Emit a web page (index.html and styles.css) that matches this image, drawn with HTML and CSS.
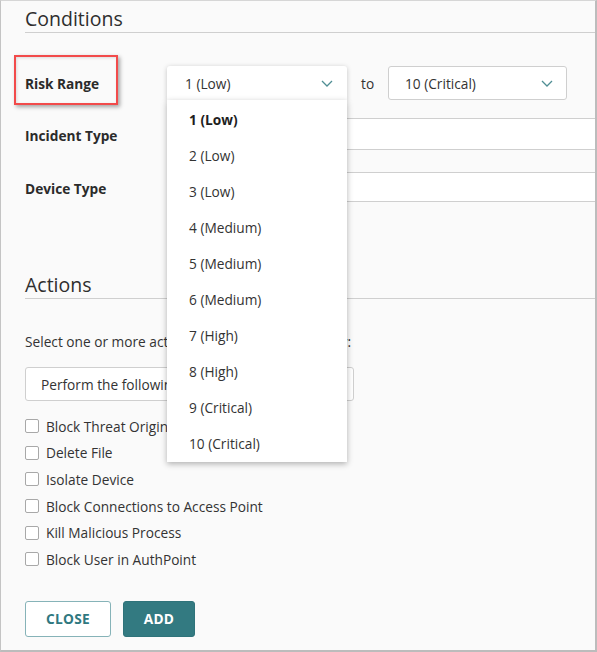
FILE: index.html
```html
<!DOCTYPE html>
<html>
<head>
<meta charset="utf-8">
<link rel="stylesheet" href="styles.css">
</head>
<body>
<div class="frame">
  <h2 class="section-title">Conditions</h2>
  <div class="conditions">
    <div class="row row-risk">
      <div class="label">Risk Range</div>
      <div class="select select-open">
        <span>1 (Low)</span>
        <svg class="chev" width="12" height="7" viewBox="0 0 12 7"><path d="M1 1 L6 6 L11 1" fill="none" stroke="#4f8e94" stroke-width="1.3"/></svg>
      </div>
      <div class="to">to</div>
      <div class="select select-to">
        <span>10 (Critical)</span>
        <svg class="chev" width="12" height="7" viewBox="0 0 12 7"><path d="M1 1 L6 6 L11 1" fill="none" stroke="#4f8e94" stroke-width="1.3"/></svg>
      </div>
    </div>
    <div class="row row-incident">
      <div class="label label-low">Incident Type</div>
      <div class="input"></div>
    </div>
    <div class="row row-device">
      <div class="label label-low">Device Type</div>
      <div class="input input-device"></div>
    </div>
  </div>

  <h2 class="section-title actions-title">Actions</h2>
  <p class="hint">Select one or more actions to deploy automatically:</p>
  <div class="select select-wide"><span>Perform the following actions</span></div>
  <ul class="checks">
    <li><span class="box"></span>Block Threat Origin</li>
    <li><span class="box"></span>Delete File</li>
    <li><span class="box"></span>Isolate Device</li>
    <li><span class="box"></span>Block Connections to Access Point</li>
    <li><span class="box"></span>Kill Malicious Process</li>
    <li><span class="box"></span>Block User in AuthPoint</li>
  </ul>
  <div class="buttons">
    <button class="btn btn-close">CLOSE</button>
    <button class="btn btn-add">ADD</button>
  </div>

  <ul class="menu">
    <li class="selected">1 (Low)</li>
    <li>2 (Low)</li>
    <li>3 (Low)</li>
    <li>4 (Medium)</li>
    <li>5 (Medium)</li>
    <li>6 (Medium)</li>
    <li>7 (High)</li>
    <li>8 (High)</li>
    <li>9 (Critical)</li>
    <li>10 (Critical)</li>
  </ul>
  <div class="highlight"></div>
</div>
</body>
</html>
```

FILE: styles.css
```css
html, body {
  margin: 0;
  padding: 0;
  background: #fafafa;
}
body {
  font-family: "Open Sans", "Noto Sans", sans-serif;
  color: #333;
  font-size: 13.7px;
}
.frame {
  position: relative;
  box-sizing: border-box;
  width: 597px;
  height: 652px;
  overflow: hidden;
  background: #fafafa;
  border-top: 1px solid #d6d6d6;
  border-left: 1px solid #c4c4c4;
  border-right: 2px solid #bcbcbc;
  border-bottom: 2px solid #bcbcbc;
  padding: 6px 0 0 24px;
}
.section-title {
  margin: 0;
  font-weight: 400;
  font-size: 19.5px;
  line-height: 24px;
  padding-bottom: 1px;
  border-bottom: 1px solid #cfcfcf;
  color: #2e2e2e;
}
.conditions {
  margin-top: 33px;
}
.row {
  display: flex;
  align-items: center;
}
.label {
  width: 142px;
  flex: none;
  font-weight: 700;
  color: #2b2b2b;
}
.label-low {
  padding-top: 3px;
}
.select {
  box-sizing: border-box;
  display: flex;
  align-items: center;
  justify-content: space-between;
  background: #fff;
  border: 1px solid #cfcfcf;
  border-radius: 3px;
  height: 34px;
}
.select-open {
  width: 180px;
  border-color: transparent;
  border-radius: 3px 3px 0 0;
  box-shadow: 0 1px 5px rgba(0,0,0,0.22);
  padding: 0 13px 0 17px;
}
.select-to {
  width: 179px;
  padding: 0 13px 0 16px;
}
.to {
  width: 41px;
  box-sizing: border-box;
  padding-left: 14px;
}
.chev {
  display: block;
}
.row-incident {
  margin-top: 18px;
}
.row-device {
  margin-top: 22px;
}
.input {
  flex: 1;
  box-sizing: border-box;
  height: 32px;
  background: #fff;
  border: 1px solid #cfcfcf;
  border-right: none;
  margin-right: -10px;
}
.input-device {
  height: 30px;
}
.actions-title {
  margin-top: 71px;
}
.hint {
  margin: 33px 0 0;
  line-height: 20px;
}
.select-wide {
  width: 329px;
  margin-top: 15px;
  padding-left: 15px;
}
.checks {
  list-style: none;
  margin: 12px 0 0;
  padding: 0;
}
.checks li {
  display: flex;
  align-items: center;
  height: 26.6px;
}
.box {
  box-sizing: border-box;
  width: 14px;
  height: 14px;
  border: 1px solid #a8a8a8;
  border-radius: 2px;
  background: #fff;
  margin-right: 7px;
}
.buttons {
  display: flex;
  gap: 12px;
  margin-top: 28px;
}
.btn {
  box-sizing: border-box;
  height: 36px;
  border-radius: 3px;
  font-family: "Open Sans", "Noto Sans", sans-serif;
  font-weight: 700;
  font-size: 13.7px;
  letter-spacing: 0.3px;
  padding: 0;
}
.btn-close {
  width: 86px;
  background: #fff;
  border: 1px solid #86b3b8;
  color: #2f7880;
}
.btn-add {
  width: 72px;
  background: #337a81;
  border: 1px solid #2f737a;
  color: #fff;
}
.menu {
  position: absolute;
  left: 166px;
  top: 99px;
  width: 180px;
  margin: 0;
  padding: 2px 0 0;
  list-style: none;
  background: #fff;
  box-shadow: 0 2px 6px rgba(0,0,0,0.3);
  height: 362px;
  box-sizing: border-box;
}
.menu li {
  height: 36px;
  line-height: 36px;
  padding-left: 22px;
  color: #333;
}
.menu li.selected {
  font-weight: 700;
  color: #1e1e1e;
}
.highlight {
  position: absolute;
  left: 13px;
  top: 54px;
  width: 104px;
  height: 50px;
  box-sizing: border-box;
  border: 2.5px solid #f24b4b;
  box-shadow: 2px 2px 4px rgba(0,0,0,0.35), inset 1px 1px 3px rgba(0,0,0,0.12);
}
```
